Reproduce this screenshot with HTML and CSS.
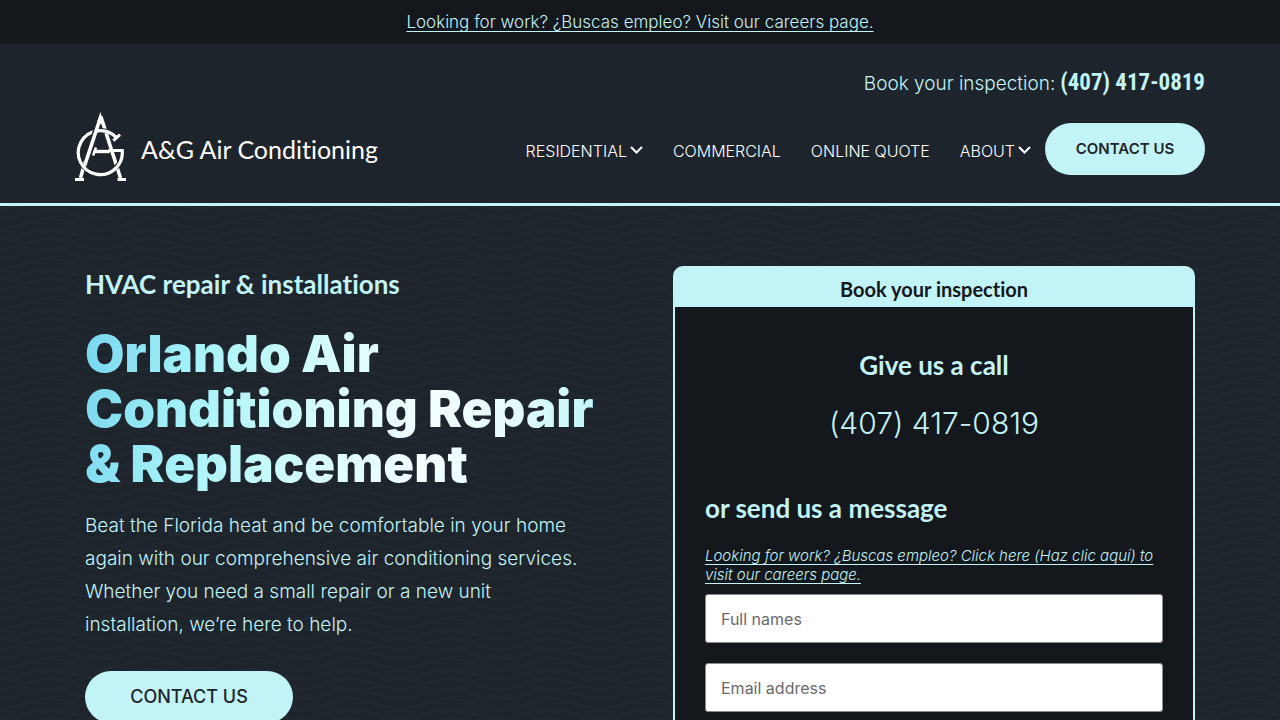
FILE: index.html
```html
<!DOCTYPE html>
<html lang="en">
<head>
    <meta charset="UTF-8">
    <meta name="viewport" content="width=device-width, initial-scale=1.0">
    <title>A&amp;G Air Conditioning</title>
    <link rel="stylesheet" href="styles.css">
</head>
<body>
    <div class="top-bar">
        <a href="#careers">Looking for work? ¿Buscas empleo? Visit our careers page.</a>
    </div>

    <header class="site-header">
        <div class="header-call">
            <span>Book your inspection:</span>
            <a href="tel:4074170819">(407) 417-0819</a>
        </div>
        <div class="header-main">
            <a class="logo" href="#">
                <svg class="logo-mark" viewBox="0 0 52 70" fill="none" stroke="#fff" aria-hidden="true">
                    <!-- right leg, then the G over it -->
                    <path d="M26 5L45.500 66" stroke-width="3.600"/>
                    <path d="M10 50L5.500 66" stroke-width="3.600"/>
                    <path d="M27 18.600A22 22 0 0 1 32 19.400M5 49.500A22 22 0 0 0 12 58M38 58A22 22 0 0 0 45.500 49" stroke="#1e242c" stroke-width="4.600"/>
                    <path d="M41 25.200A22 22 0 1 0 47.200 38.500H33.500" stroke-width="3.200"/>
                    <path d="M38.300 28.700L45 22.700" stroke-width="3"/>
                    <!-- left leg over the top of the G -->
                    <path d="M20 15L17 24" stroke="#1e242c" stroke-width="2"/>
                    <path d="M26 4L9.500 54" stroke-width="3.600"/>
                    <path d="M25.300 0L29.500 13L26 12L22 11Z" fill="#fff" stroke="none"/>
                    <path d="M19 39.500H34.500" stroke-width="3.400"/>
                    <path d="M21 35.500L18 43.500" stroke-width="2.600"/>
                    <path d="M0 67.500H9M42.500 67.500H51" stroke-width="3.200"/>
                </svg>
                <span>A&amp;G Air Conditioning</span>
            </a>
            <nav class="main-nav">
                <a href="#residential">RESIDENTIAL<svg class="chevron" viewBox="0 0 13 8" aria-hidden="true"><path d="M1 1l5.500 5.500L12 1"/></svg></a>
                <a href="#commercial">COMMERCIAL</a>
                <a href="#quote">ONLINE QUOTE</a>
                <a href="#about">ABOUT<svg class="chevron" viewBox="0 0 13 8" aria-hidden="true"><path d="M1 1l5.500 5.500L12 1"/></svg></a>
            </nav>
            <a class="button button-nav" href="#contact">CONTACT US</a>
        </div>
    </header>

    <main class="hero">
        <div class="hero-inner">
            <section class="intro">
                <p class="tagline">HVAC repair &amp; installations</p>
                <h1>Orlando Air<br>Conditioning Repair<br>&amp; Replacement</h1>
                <p class="lead">Beat the Florida heat and be comfortable in your home again with our comprehensive air conditioning services. Whether you need a small repair or a new unit installation, we’re here to help.</p>
                <a class="button button-hero" href="#contact">CONTACT US</a>
            </section>

            <section class="booking" id="contact">
                <h2>Book your inspection</h2>
                <div class="booking-body">
                    <h3 class="centered">Give us a call</h3>
                    <a class="big-phone" href="tel:4074170819">(407) 417-0819</a>
                    <h3>or send us a message</h3>
                    <a class="careers-link" href="#careers">Looking for work? ¿Buscas empleo? Click here (Haz clic aquí) to visit our careers page.</a>
                    <form>
                        <input type="text" name="name" placeholder="Full names" aria-label="Full names">
                        <input type="email" name="email" placeholder="Email address" aria-label="Email address">
                    </form>
                </div>
            </section>
        </div>
    </main>
</body>
</html>
```
FILE: styles.css
```css
* {
    box-sizing: border-box;
}

body {
    margin: 0;
    font-family: Inter, "Open Sans", sans-serif;
    font-weight: 300;
    font-variant-ligatures: none;
    color: #c2f3f6;
    background-color: #1e242c;
}

a {
    color: inherit;
    text-decoration: none;
}

h1, h2, h3, p {
    margin: 0;
}

.top-bar {
    padding: 10px 20px;
    background-color: #14171b;
    font-size: 17px;
    line-height: 24px;
    text-align: center;
}

.top-bar a,
.careers-link {
    text-decoration: underline;
    text-decoration-skip-ink: none;
    text-decoration-thickness: 1px;
    text-underline-offset: 3px;
}

.site-header {
    padding: 20px 75px 17px;
    border-bottom: 3px solid #c2f3f6;
}

.header-call {
    display: flex;
    justify-content: flex-end;
    align-items: baseline;
    gap: 5px;
    height: 36px;
    font-size: 19px;
    line-height: 38px;
}

.header-call a {
    font-family: "Liberation Sans Narrow", "Roboto Condensed", Roboto, sans-serif;
    font-size: 23px;
    font-weight: bold;
}

.header-main {
    display: flex;
    align-items: center;
    padding-top: 12px;
}

.logo {
    display: flex;
    align-items: center;
    gap: 14px;
    margin-right: auto;
    color: #fff;
    font-family: Lato, sans-serif;
    font-size: 25px;
    font-weight: 400;
    white-space: nowrap;
}

.logo-mark {
    width: 52px;
    height: 70px;
    margin-bottom: 4px;
}

.main-nav {
    display: flex;
    gap: 30px;
    margin-right: 14px;
    padding-top: 4px;
    color: #fff;
    font-size: 16px;
    line-height: 24px;
    white-space: nowrap;
}

.chevron {
    width: 13px;
    height: 8px;
    margin-left: 3px;
    margin-bottom: 3px;
    fill: none;
    stroke: #fff;
    stroke-width: 2;
}

.button {
    display: inline-block;
    border-radius: 26px;
    background-color: #c2f3f6;
    color: #1e242c;
    line-height: 52px;
    text-align: center;
    white-space: nowrap;
}

.button-nav {
    width: 160px;
    font-size: 15px;
    font-weight: 600;
}

.button-hero {
    width: 208px;
    margin-top: 30px;
    font-size: 18px;
    font-weight: 500;
}

.hero {
    padding: 60px 75px;
    background-image: url("data:image/svg+xml,%3Csvg xmlns='http://www.w3.org/2000/svg' width='100' height='10'%3E%3Cg fill='none' stroke='%2321282f' stroke-width='2'%3E%3Cpath d='M0 3C20 3 30 -7 50 -7S80 3 100 3M0 13C20 13 30 3 50 3S80 13 100 13'/%3E%3C/g%3E%3C/svg%3E");
}

.hero-inner {
    display: grid;
    grid-template-columns: 1fr 1fr;
    gap: 66px;
    max-width: 1110px;
    margin: 0 auto;
}

.tagline,
.booking h2,
.booking h3 {
    font-family: Lato, sans-serif;
    font-weight: bold;
}

.tagline {
    font-size: 26px;
    line-height: 36px;
}

h1 {
    margin: 24px 0 18px;
    font-size: 51px;
    font-weight: 900;
    line-height: 55px;
    white-space: nowrap;
    background-image: linear-gradient(100deg, #77d6ee 0%, #a8f3f9 22%, #d5fcfb 45%, #f4feff 66%, #e6fbfc 80%, #b5f5f9 100%);
    background-clip: text;
    -webkit-background-clip: text;
    color: transparent;
}

.lead {
    max-width: 510px;
    font-size: 19px;
    line-height: 33px;
}

.booking {
    border: 2px solid #c2f3f6;
    border-radius: 10px;
    background-color: #c2f3f6;
    overflow: hidden;
}

.booking h2 {
    padding-top: 3px;
    color: #14171b;
    font-size: 20px;
    line-height: 36px;
    text-align: center;
}

.booking-body {
    padding: 40px 30px;
    background-color: #14171b;
}

.booking h3 {
    font-size: 26px;
    line-height: 36px;
}

.booking .centered {
    text-align: center;
}

.big-phone {
    display: block;
    margin: 20px 0 47px;
    font-size: 30px;
    line-height: 40px;
    text-align: center;
}

.careers-link {
    display: block;
    margin: 20px 0 10px;
    font-size: 15px;
    font-style: italic;
    line-height: 19px;
}

.booking form {
    display: grid;
    gap: 20px;
}

.booking input {
    width: 100%;
    height: 49px;
    padding: 0 15px;
    border: 1px solid #8b8b8b;
    border-radius: 3px;
    background-color: #fff;
    color: #14171b;
    font-family: inherit;
    font-size: 16px;
}

.booking input::placeholder {
    color: #6a6a6a;
}
```
